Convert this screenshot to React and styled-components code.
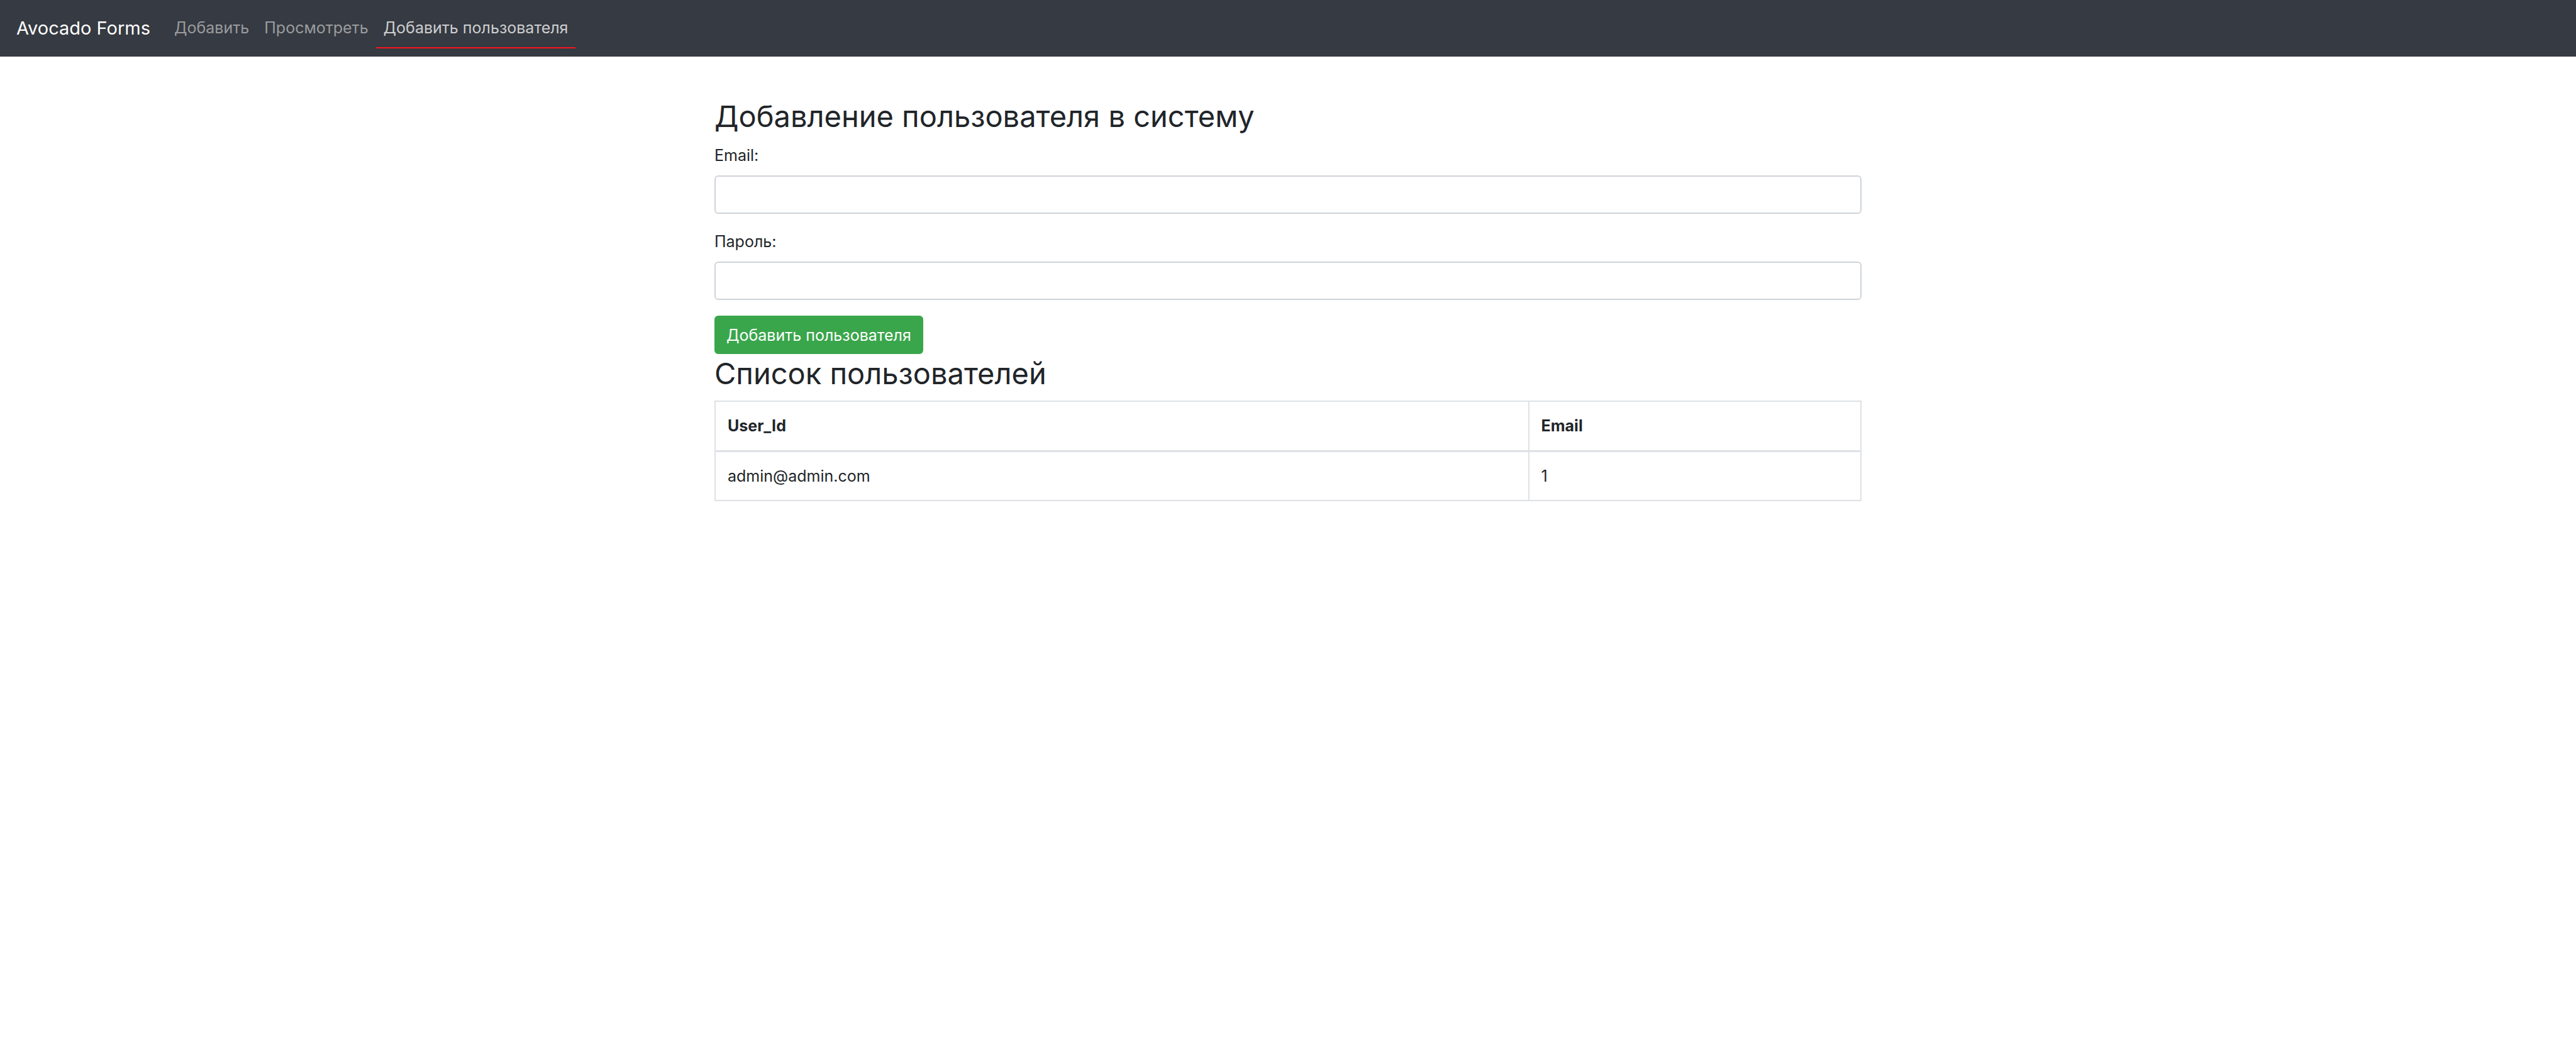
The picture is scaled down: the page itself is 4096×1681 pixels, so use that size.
import React from "react";
import styled, { createGlobalStyle } from "styled-components";

const GlobalStyle = createGlobalStyle`
  *, *::before, *::after { box-sizing: border-box; }
  body {
    margin: 0;
    background: #fff;
    color: #212529;
    font-family: Inter, Roboto, "Liberation Sans", sans-serif;
    font-size: 25px;
    line-height: 38px;
  }
`;

const Navbar = styled.nav`
  display: flex;
  align-items: center;
  height: 90px;
  padding: 0 26px;
  background: #363a42;
`;

const Brand = styled.a`
  margin-right: 26px;
  color: #fff;
  font-size: 29px;
  line-height: 48px;
  text-decoration: none;
`;

const NavList = styled.ul`
  display: flex;
  margin: 0;
  padding: 0;
  list-style: none;
`;

const NavLink = styled.a`
  display: block;
  padding: 12px;
  border-bottom: 2px solid ${(p) => (p.$active ? "#f9151e" : "transparent")};
  color: ${(p) => (p.$active ? "#cdced0" : "#9a9c9f")};
  text-decoration: none;
`;

const Container = styled.main`
  max-width: 1824px;
  margin: 0 auto;
  padding-top: 64px;
`;

const Heading = styled.h2`
  margin: 0 0 12px;
  font-size: 47px;
  font-weight: 400;
  line-height: 62px;
`;

const Field = styled.div`
  display: flex;
  flex-direction: column;
  gap: 13px;
  margin-bottom: 25px;
`;

const Input = styled.input`
  width: 100%;
  height: 61px;
  padding: 10px 19px;
  border: 2px solid #ced4da;
  border-radius: 6px;
  background: #fff;
  color: #495057;
  font: inherit;
`;

const SubmitButton = styled.button`
  display: block;
  height: 61px;
  padding: 0 19px;
  border: 0;
  border-radius: 6px;
  background: #3aa64b;
  color: #fff;
  font: inherit;
  cursor: pointer;
`;

const Table = styled.table`
  width: 100%;
  table-layout: fixed;
  border-collapse: collapse;
  border: 2px solid #dee2e6;

  th,
  td {
    height: 79px;
    padding: 0 19px;
    border: 2px solid #dee2e6;
    text-align: left;
  }

  th {
    border-bottom-width: 3px;
    font-weight: 700;
  }
`;

const WideColumn = styled.col`
  width: 71%;
`;

const links = [
  { label: "Добавить" },
  { label: "Просмотреть" },
  { label: "Добавить пользователя", active: true },
];

const users = [{ id: "admin@admin.com", email: "1" }];

export default function App() {
  return (
    <>
      <GlobalStyle />
      <Navbar>
        <Brand href="#">Avocado Forms</Brand>
        <NavList>
          {links.map((link) => (
            <li key={link.label}>
              <NavLink href="#" $active={link.active}>
                {link.label}
              </NavLink>
            </li>
          ))}
        </NavList>
      </Navbar>
      <Container>
        <Heading>Добавление пользователя в систему</Heading>
        <form onSubmit={(e) => e.preventDefault()}>
          <Field>
            <label htmlFor="email">Email:</label>
            <Input id="email" type="email" />
          </Field>
          <Field>
            <label htmlFor="password">Пароль:</label>
            <Input id="password" type="password" />
          </Field>
          <SubmitButton type="submit">Добавить пользователя</SubmitButton>
        </form>
        <Heading>Список пользователей</Heading>
        <Table>
          <colgroup>
            <WideColumn />
            <col />
          </colgroup>
          <thead>
            <tr>
              <th scope="col">User_Id</th>
              <th scope="col">Email</th>
            </tr>
          </thead>
          <tbody>
            {users.map((user) => (
              <tr key={user.id}>
                <td>{user.id}</td>
                <td>{user.email}</td>
              </tr>
            ))}
          </tbody>
        </Table>
      </Container>
    </>
  );
}
